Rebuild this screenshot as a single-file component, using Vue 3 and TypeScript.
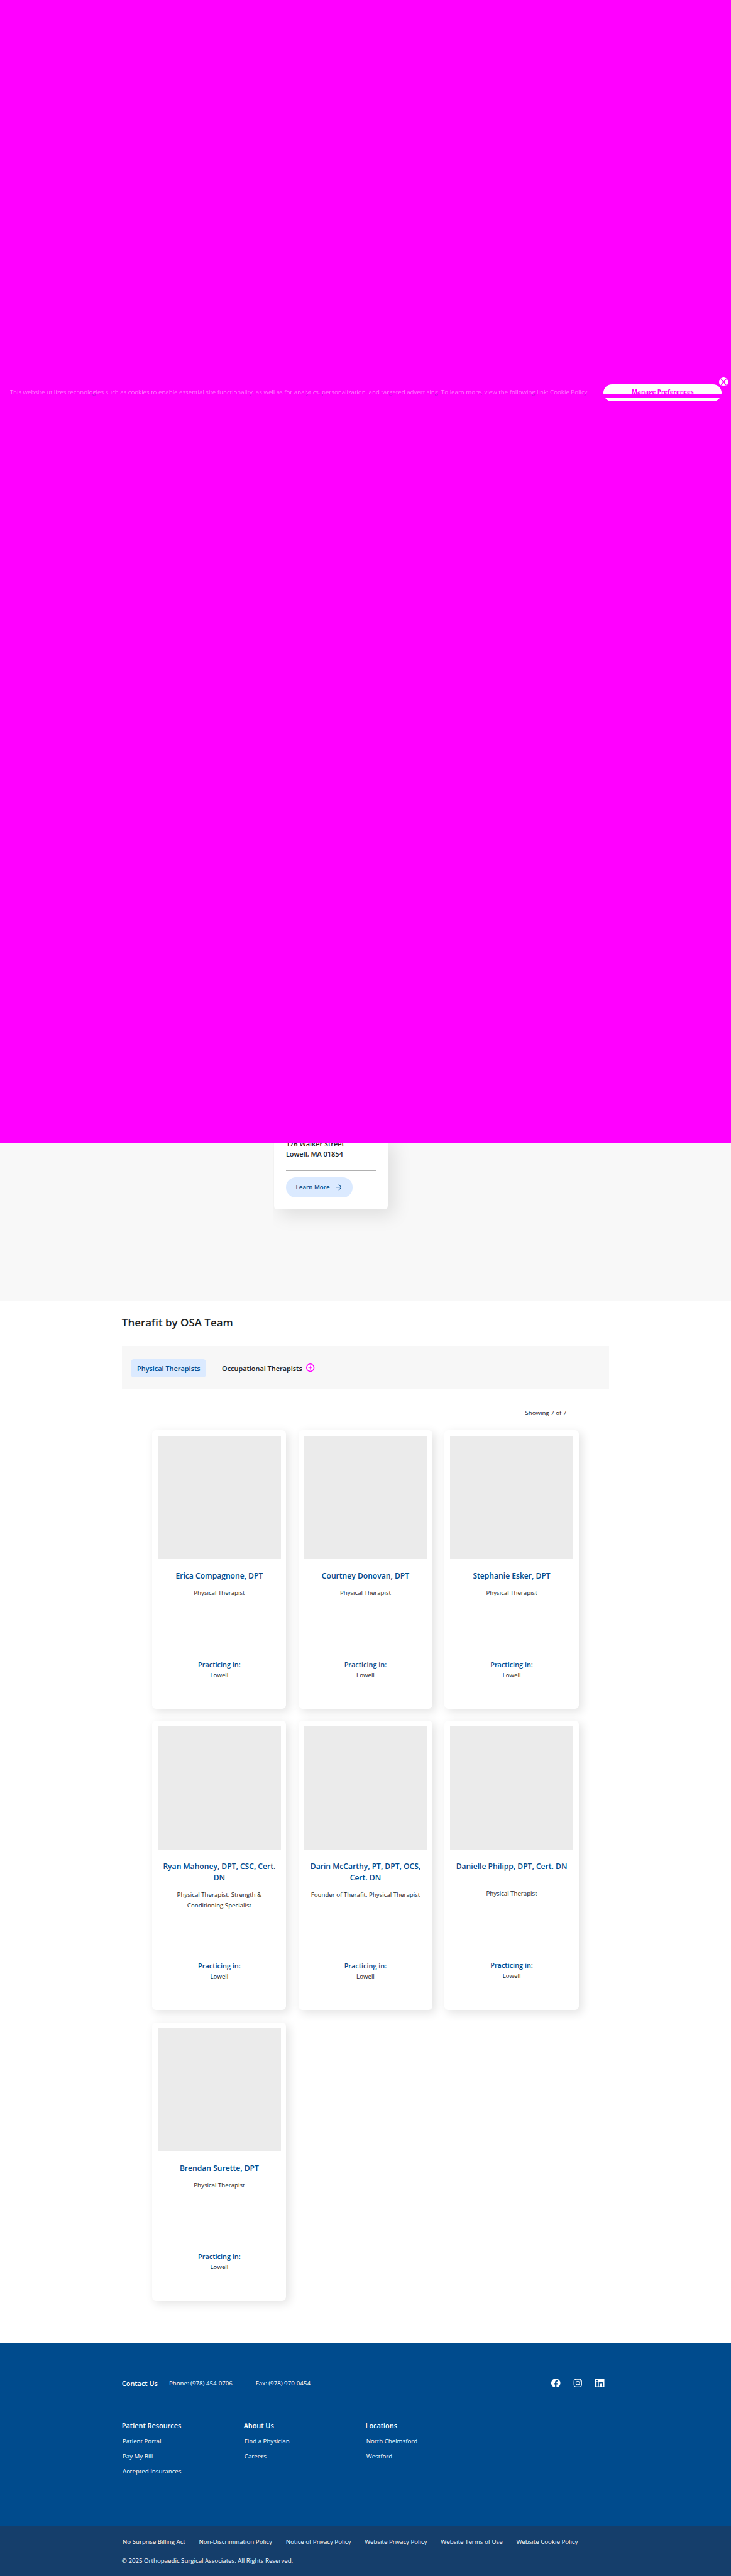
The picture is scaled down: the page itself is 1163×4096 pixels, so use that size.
<script setup lang="ts">
interface Member {
  name: string[]
  title: string[]
  tall?: number
}

const members: Member[] = [
  { name: ['Erica Compagnone, DPT'], title: ['Physical Therapist'] },
  { name: ['Courtney Donovan, DPT'], title: ['Physical Therapist'] },
  { name: ['Stephanie Esker, DPT'], title: ['Physical Therapist'] },
  { name: ['Ryan Mahoney, DPT, CSC, Cert.', 'DN'], title: ['Physical Therapist, Strength &', 'Conditioning Specialist'], tall: 60 },
  { name: ['Darin McCarthy, PT, DPT, OCS,', 'Cert. DN'], title: ['Founder of Therafit, Physical Therapist'], tall: 60 },
  { name: ['Danielle Philipp, DPT, Cert. DN'], title: ['Physical Therapist'], tall: 57 },
  { name: ['Brendan Surette, DPT'], title: ['Physical Therapist'] },
]

const columns = [
  { heading: 'Patient Resources', links: ['Patient Portal', 'Pay My Bill', 'Accepted Insurances'] },
  { heading: 'About Us', links: ['Find a Physician', 'Careers'] },
  { heading: 'Locations', links: ['North Chelmsford', 'Westford'] },
]

const policies = [
  'No Surprise Billing Act',
  'Non-Discrimination Policy',
  'Notice of Privacy Policy',
  'Website Privacy Policy',
  'Website Terms of Use',
  'Website Cookie Policy',
]
</script>

<template>
  <div class="page">
    <section class="cover">
      <div class="banner">
        <p class="banner-text">This website utilizes technologies such as cookies to enable essential site functionality, as well as for analytics, personalization, and targeted advertising. To learn more, view the following link: Cookie Policy</p>
        <button class="manage"><span>Manage Preferences</span></button>
        <svg class="close" viewBox="0 0 24 24">
          <path d="M2.5 19.500A12 12 0 1 1 21.500 19.500Q17 21.500 12 21.500T2.500 19.500Z" fill="#fff" />
          <path d="M5.500 4.500 18.500 20M18.500 4.500 5.500 20" stroke="#f0f" stroke-width="2.400" />
        </svg>
      </div>
    </section>

    <section class="locations">
      <a class="all">See All Locations</a>
      <div class="slider">
        <article class="place">
          <p class="address">176 Walker Street<br />Lowell, MA 01854</p>
          <hr />
          <a class="learn">Learn More
            <svg viewBox="0 0 16 16" width="16" height="16" fill="none" stroke="#004b8d" stroke-width="1.700"><path d="M0 8h15M8 .7 15.200 8 8 15.300" /></svg>
          </a>
        </article>
      </div>
    </section>

    <section class="team">
      <h2>Therafit by OSA Team</h2>
      <div class="tabs">
        <span class="tab active">Physical Therapists</span>
        <span class="tab">Occupational Therapists</span>
        <svg class="plus" viewBox="0 0 22 22">
          <circle cx="11" cy="11" r="9.700" fill="#fff" stroke="#f0f" stroke-width="2.600" />
          <path d="M11 6v10M6 11h10" stroke="#f0f" stroke-width="1.300" />
        </svg>
      </div>
      <p class="count">Showing 7 of 7</p>
      <div class="grid">
        <article v-for="m in members" :key="m.name[0]" class="card">
          <div class="photo"></div>
          <h3 :style="{ height: (m.tall ?? 30) + 'px' }"><div v-for="l in m.name" :key="l">{{ l }}</div></h3>
          <div class="role"><div v-for="l in m.title" :key="l">{{ l }}</div></div>
          <div class="practice">Practicing in:</div>
          <div class="town">Lowell</div>
        </article>
      </div>
    </section>

    <footer>
      <div class="main">
        <div class="contact">
          <strong>Contact Us</strong>
          <span class="phone">Phone: (978) 454-0706</span>
          <span class="fax">Fax: (978) 970-0454</span>
          <div class="social">
            <svg viewBox="0 0 24 24" fill="#fff"><path d="M24 12a12 12 0 1 0-13.900 11.900v-8.400H7V12h3.100V9.400c0-3 1.800-4.700 4.500-4.700 1.300 0 2.700.2 2.700.2v3h-1.500c-1.500 0-2 .9-2 1.900V12h3.400l-.5 3.500h-2.900v8.400A12 12 0 0 0 24 12z" /></svg>
            <svg viewBox="0 0 24 24" fill="none" stroke="#fff" stroke-width="1.700"><rect x="1.900" y="1.900" width="20.200" height="20.200" rx="5.800" /><circle cx="12" cy="12" r="4.700" /><circle cx="17.900" cy="6.200" r="1.400" fill="#fff" stroke="none" /></svg>
            <svg viewBox="0 0 24 24"><rect width="24" height="24" rx="1.500" fill="#fff" /><g fill="#004b8d"><circle cx="5.300" cy="5.400" r="2.100" /><path d="M3.500 9h3.600v11.500H3.500zM9.400 9h3.400v1.600c.6-1 1.900-1.900 3.500-1.900 3.600 0 4.300 2.400 4.300 5.500v6.300H17v-5.600c0-1.300 0-3-1.900-3s-2.100 1.400-2.100 2.900v5.700H9.400z" /></g></svg>
          </div>
        </div>
        <div class="columns">
          <div v-for="c in columns" :key="c.heading" class="column">
            <strong>{{ c.heading }}</strong>
            <a v-for="l in c.links" :key="l">{{ l }}</a>
          </div>
        </div>
      </div>
      <div class="legal">
        <nav><a v-for="p in policies" :key="p">{{ p }}</a></nav>
        <p>© 2025 Orthopaedic Surgical Associates. All Rights Reserved.</p>
      </div>
    </footer>
  </div>
</template>

<style>
html, body { margin: 0; background: #fff; overflow: hidden; }
</style>

<style scoped>
.page, .page * { box-sizing: border-box; }
.page {
  width: 1920px;
  height: 6762px;
  zoom: 0.605729;
  font: 400 16px/24px "Open Sans", sans-serif;
  color: #212529;
  background: #fff;
  white-space: nowrap;
}
p, h2, h3, hr { margin: 0; }
.cover { height: 3000px; background: #f0f; padding-top: 1008px; }
.banner { position: relative; display: flex; align-items: flex-start; padding-left: 26px; height: 46px; }
.banner-text {
  width: 1559px;
  height: 30px;
  padding-top: 12px;
  font-size: 16px;
  line-height: 20px;
  color: transparent;
  background: linear-gradient(rgba(255, 255, 255, .5) 26px, rgba(60, 60, 160, .45) 26px, rgba(60, 60, 160, .45) 29px, transparent 29px);
  background-clip: text;
  -webkit-background-clip: text;
}
.manage {
  width: 311px;
  height: 46px;
  padding: 12px 0 0;
  border: 0;
  border-radius: 23px;
  background: linear-gradient(#fff 26px, #f0f 26px, #f0f 36px, #fff 36px);
  font: 700 16px/20px "Open Sans", sans-serif;
  color: #f0f;
  display: flex;
  justify-content: center;
}
.close { position: absolute; left: 1889px; top: -17px; width: 24px; height: 24px; }

.locations {
  height: 414px;
  background: #f8f8f8;
  overflow: hidden;
  display: flex;
  padding-left: 321px;
}
.all { width: 395px; margin-top: -16px; font-size: 18px; line-height: 24px; font-weight: 600; color: #004b8d; }
.slider { overflow: hidden; height: 414px; width: 400px; padding-left: 3px; }
.place {
  width: 300px;
  height: 185px;
  margin-top: -11px;
  padding: 0 32px;
  background: #fff;
  border-radius: 0 0 10px 10px;
  box-shadow: 16px 16px 48px rgba(0, 0, 0, .1);
}
.address { font-size: 18px; line-height: 27px; font-weight: 600; color: #212121; }
hr { border: 0; height: 1.600px; background: #b0b0b0; margin: 30px 0 16px; }
.learn {
  width: 175px;
  height: 52px;
  border-radius: 26px;
  background: #dbeaff;
  color: #004b8d;
  font-weight: 600;
  display: flex;
  align-items: center;
  padding-left: 26px;
}
.learn svg { margin-left: 15px; }

.team { height: 2737px; padding: 38px 320px 0; }
h2 { font-size: 28px; line-height: 38px; height: 83px; font-weight: 600; color: #212121; }
.tabs { height: 112px; background: #f7f7f7; display: flex; align-items: center; padding-left: 24px; }
.tab { font-size: 18px; font-weight: 600; color: #212121; height: 48px; line-height: 48px; margin-left: 41px; }
.tab.active { width: 198px; text-align: center; background: #dbeaff; color: #004b8d; border-radius: 8px; margin: 0; }
.plus { width: 22px; height: 22px; margin-left: 11px; }
.count { text-align: right; margin: 51px 112px 0 0; height: 57px; line-height: 24px; }
.grid { display: grid; grid-template-columns: repeat(3, 352px); gap: 32px; padding-left: 80px; }
.card {
  padding: 14px 14px 0;
  height: 730px;
  border-radius: 10px;
  background: #fff;
  text-align: center;
  box-shadow: 8px 8px 24px rgba(0, 0, 0, .11);
}
.card:nth-child(n + 4):nth-child(-n + 6) { height: 760px; }
.photo { height: 324px; background: #ebebeb; }
h3 { margin-top: 30px; font-size: 20px; line-height: 30px; font-weight: 600; color: #004b8d; }
.role { margin-top: 16.500px; height: 187px; line-height: 28px; }
.practice { font-size: 18px; line-height: 28px; font-weight: 600; color: #004b8d; }
.town { line-height: 25px; }

footer { color: #fff; }
.main { height: 479px; background: #004b8d; padding: 0 320px; }
.contact {
  height: 153px;
  padding-top: 56px;
  display: flex;
  align-items: flex-start;
  border-bottom: 1.700px solid #fff;
  line-height: 98px;
}
strong { font-size: 18px; font-weight: 600; }
.phone { margin-left: 30px; }
.fax { margin-left: 61px; }
.social { margin-left: auto; margin-right: 12px; display: flex; gap: 34px; padding-top: 36px; }
.social svg { width: 24px; height: 24px; }
.columns { display: flex; padding-top: 50px; }
.column { width: 320px; display: flex; flex-direction: column; }
.column strong { line-height: 28px; height: 35px; }
.column a { line-height: 40px; height: 40px; padding-left: 2px; }
.legal { height: 132px; background: #153e6b; padding: 31px 320px 0; }
.legal nav { display: flex; gap: 36px; padding-left: 2px; height: 50px; }
</style>
